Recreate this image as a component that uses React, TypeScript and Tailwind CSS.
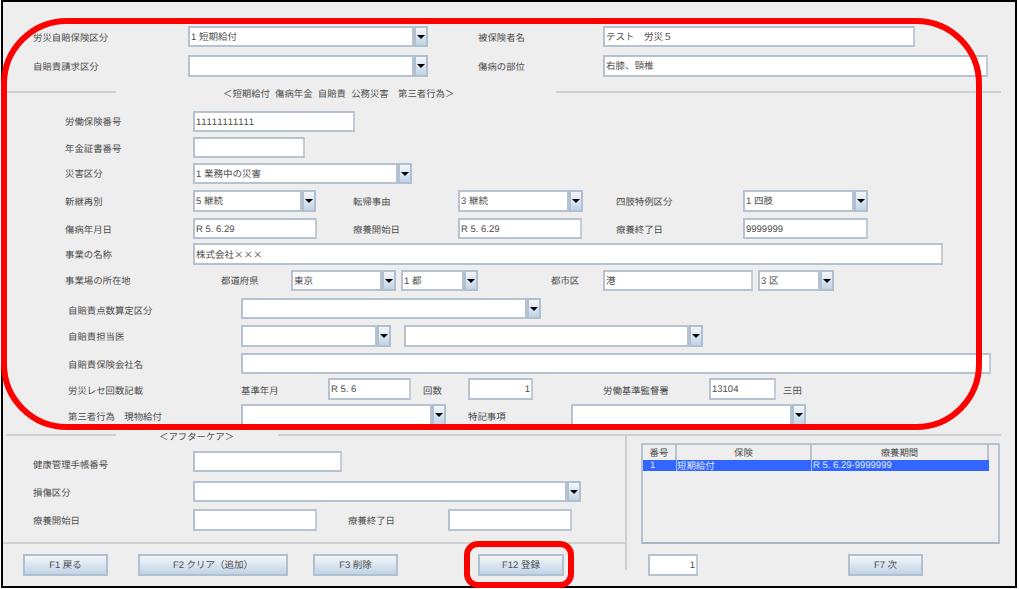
import React from "react";

const font = '"Liberation Sans","Noto Sans CJK JP",sans-serif';

function Field({ className = "", value = "", right = false }: { className?: string; value?: string; right?: boolean }) {
  return (
    <div
      className={`shrink-0 h-full bg-white border-2 border-[#b6c2cf] border-r-[#c3ccd6] flex items-center px-px pt-[2px] text-[9.5px] leading-none text-[#4d4d4d] whitespace-nowrap ${right ? "justify-end" : ""} ${className}`}
    >
      {value}
    </div>
  );
}

function Combo({ className = "", value = "" }: { className?: string; value?: string }) {
  return (
    <div className={`shrink-0 h-full flex ${className}`}>
      <div className="flex-1 min-w-0 bg-white border-2 border-[#b6c2cf] flex items-center px-px pt-[2px] text-[9.5px] leading-none text-[#4d4d4d] whitespace-nowrap">
        {value}
      </div>
      <div className="w-[14px] shrink-0 border-2 border-[#b0c0d0] bg-gradient-to-b from-[#f4f7fb] to-[#c0d3e6] flex items-center justify-center">
        <div className="w-0 h-0 border-l-[4px] border-r-[4px] border-t-[4px] border-l-transparent border-r-transparent border-t-black" />
      </div>
    </div>
  );
}

function Label({ className = "", children }: { className?: string; children: React.ReactNode }) {
  return (
    <div className={`shrink-0 text-[9.4px] leading-none text-[#4d4d4d] whitespace-nowrap ${className}`}>{children}</div>
  );
}

function Btn({ className = "", children }: { className?: string; children: React.ReactNode }) {
  return (
    <div
      className={`shrink-0 h-full border-2 border-[#b0c0d0] bg-gradient-to-b from-[#f4f7fb] to-[#c0d3e6] flex items-center justify-center pt-[2px] text-[9.5px] leading-none text-[#4d4d4d] whitespace-nowrap ${className}`}
    >
      {children}
    </div>
  );
}

export default function App() {
  return (
    <div
      className="relative w-[1019px] h-[589px] bg-white overflow-hidden [text-rendering:geometricPrecision] [font-kerning:none]"
      style={{ fontFamily: font }}
    >
      <div className="ml-px w-[1016px] h-[588px] border-2 border-black bg-[#eeeeee] flex flex-col">
        {/* top rows */}
        <div className="mt-[24px] h-[21px] flex items-center pl-[30px]">
          <Label className="w-[155px] mt-[2px]">労災自賠保険区分</Label>
          <Combo className="w-[240px]" value="1 短期給付" />
          <Label className="ml-[50px] w-[125px] mt-[2px]">被保険者名</Label>
          <Field className="w-[312px]" value="テスト　労災５" />
        </div>
        <div className="mt-[8px] h-[22px] flex items-center pl-[30px]">
          <Label className="w-[155px] mt-[2px]">自賠責請求区分</Label>
          <Combo className="w-[240px]" />
          <Label className="ml-[50px] w-[125px] mt-[2px]">傷病の部位</Label>
          <Field className="w-[385px]" value="右膝、頸椎" />
        </div>

        <div className="mt-[9px] h-[15px] flex items-start pl-[3px]">
          <div className="mt-[5px] w-[110px] h-[2px] bg-[#cfcfcf]" />
          <Label className="ml-[107px] w-[333px] mt-[3px]">＜短期給付&nbsp; 傷病年金&nbsp; 自賠責&nbsp; 公務災害　第三者行為＞</Label>
          <div className="mt-[5px] w-[445px] h-[2px] bg-[#cfcfcf]" />
        </div>

        <div className="mt-[10px] h-[21px] flex items-center pl-[62px]">
          <Label className="w-[128px] mt-[1px]">労働保険番号</Label>
          <Field className="w-[162px]" value="11111111111" />
        </div>
        <div className="mt-[5px] h-[21px] flex items-center pl-[62px]">
          <Label className="w-[128px] mt-[2px]">年金証書番号</Label>
          <Field className="w-[112px]" />
        </div>
        <div className="mt-[5px] h-[21px] flex items-center pl-[62px]">
          <Label className="w-[128px] mt-[1px]">災害区分</Label>
          <Combo className="w-[219px]" value="1 業務中の災害" />
        </div>
        <div className="mt-[6px] h-[22px] flex items-center pl-[62px]">
          <Label className="w-[128px] mt-[1px]">新継再別</Label>
          <Combo className="w-[123px]" value="5 継続" />
          <Label className="ml-[37px] w-[105px] mt-[1px]">転帰事由</Label>
          <Combo className="w-[125px]" value="3 継続" />
          <Label className="ml-[33px] w-[127px] mt-[1px]">四肢特例区分</Label>
          <Combo className="w-[125px]" value="1 四肢" />
        </div>
        <div className="mt-[6px] h-[21px] flex items-center pl-[62px]">
          <Label className="w-[128px] mt-[2px]">傷病年月日</Label>
          <Field className="w-[124px]" value="R 5. 6.29" />
          <Label className="ml-[36px] w-[105px] mt-[2px]">療養開始日</Label>
          <Field className="w-[124px]" value="R 5. 6.29" />
          <Label className="ml-[34px] w-[127px] mt-[2px]">療養終了日</Label>
          <Field className="w-[125px]" value="9999999" />
        </div>
        <div className="mt-[4px] h-[22px] flex items-center pl-[62px]">
          <Label className="w-[128px] mt-[2px]">事業の名称</Label>
          <Field className="w-[750px] font-['Noto_Sans_CJK_JP']" value="株式会社×××" />
        </div>
        <div className="mt-[5px] h-[21px] flex items-center pl-[62px]">
          <Label className="w-[156px] mt-[1px]">事業場の所在地</Label>
          <Label className="w-[70px] mt-[1px]">都道府県</Label>
          <Combo className="w-[105px]" value="東京" />
          <Combo className="ml-[5px] w-[77px]" value="1 都" />
          <Label className="ml-[73px] w-[52px] mt-[1px]">都市区</Label>
          <Field className="w-[150px]" value="港" />
          <Combo className="ml-[5px] w-[76px]" value="3 区" />
        </div>
        <div className="mt-[7px] h-[21px] flex items-center pl-[65px]">
          <Label className="w-[173px] mt-[4px]">自賠責点数算定区分</Label>
          <Combo className="w-[300px]" />
        </div>
        <div className="mt-[6px] h-[22px] flex items-center pl-[65px]">
          <Label className="w-[173px] mt-[2px]">自賠責担当医</Label>
          <Combo className="w-[150px]" />
          <Combo className="ml-[13px] w-[299px]" />
        </div>
        <div className="mt-[6px] h-[21px] flex items-center pl-[65px]">
          <Label className="w-[173px] mt-[3px]">自賠責保険会社名</Label>
          <Field className="w-[750px]" />
        </div>
        <div className="mt-[4px] h-[22px] flex items-center pl-[65px]">
          <Label className="w-[173px] mt-[3px]">労災レセ回数記載</Label>
          <Label className="w-[87px] mt-[3px]">基準年月</Label>
          <Field className="w-[83px]" value="R 5. 6" />
          <Label className="ml-[12px] w-[45px] mt-[3px]">回数</Label>
          <Field className="w-[65px]" value="1" right />
          <Label className="ml-[70px] w-[106px] mt-[3px]">労働基準監督署</Label>
          <Field className="w-[67px]" value="13104" />
          <Label className="ml-[7px] mt-[3px]">三田</Label>
        </div>
        <div className="mt-[4px] h-[22px] flex items-center pl-[65px]">
          <Label className="w-[173px] mt-[3px]">第三者行為　現物給付</Label>
          <Combo className="w-[205px]" />
          <Label className="ml-[22px] w-[103px] mt-[3px]">特記事項</Label>
          <Combo className="w-[235px]" />
        </div>

        {/* after care heading */}
        <div className="mt-[2px] h-[14px] flex items-start pl-[3px]">
          <div className="mt-[6px] w-[110px] h-[2px] bg-[#cfcfcf]" />
          <Label className="ml-[43px] w-[119px] mt-[4px]">＜アフターケア＞</Label>
          <div className="mt-[6px] w-[723px] h-[2px] bg-[#cfcfcf]" />
        </div>

        <div className="flex flex-1 -mt-[6px] min-h-0">
          <div className="w-[622px] shrink-0 flex flex-col">
            <div className="mt-[15px] h-[21px] flex items-center pl-[30px]">
              <Label className="w-[160px] mt-[7px]">健康管理手帳番号</Label>
              <Field className="w-[149px]" />
            </div>
            <div className="mt-[9px] h-[21px] flex items-center pl-[30px]">
              <Label className="w-[160px] mt-[2px]">損傷区分</Label>
              <Combo className="w-[388px]" />
            </div>
            <div className="mt-[7px] h-[22px] flex items-center pl-[30px]">
              <Label className="w-[160px] mt-[2px]">療養開始日</Label>
              <Field className="w-[124px]" />
              <Label className="ml-[31px] w-[100px] mt-[2px]">療養終了日</Label>
              <Field className="w-[124px]" />
            </div>
            <div className="mt-[11px] h-[2px] bg-[#cfcfcf]" />
            <div className="mt-[10px] h-[22px] flex items-center pl-[20px]">
              <Btn className="w-[85px]">F1 戻る</Btn>
              <Btn className="ml-[30px] w-[150px]">F2 クリア（追加）</Btn>
              <Btn className="ml-[25px] w-[85px]">F3 削除</Btn>
              <Btn className="ml-[80px] w-[86px]">F12 登録</Btn>
            </div>
          </div>
          <div className="w-[2px] h-[134px] bg-[#cfcfcf] shrink-0" />
          <div className="flex-1 flex flex-col pl-[14px]">
            <div className="mt-[7px] w-[359px] h-[101px] border-2 border-[#b6c2cf] border-b-[#a9b6c3] shrink-0">
              <div className="flex h-[15px] w-[346px] text-[9.4px] leading-none text-[#4d4d4d]">
                <div className="w-[34px] flex items-center justify-center border-r-2 border-[#b6c2cf]">番号</div>
                <div className="w-[135px] flex items-center justify-center border-r-2 border-[#b6c2cf]">保険</div>
                <div className="flex-1 flex items-center justify-center border-r-2 border-[#b6c2cf]">療養期間</div>
              </div>
              <div className="flex h-[11px] w-[346px] bg-[#3366ff] text-[9.5px] leading-none text-[#dfe8ff]">
                <div className="w-[34px] flex items-center pl-[7px] border-r border-[#a9c0ff]">1</div>
                <div className="w-[135px] flex items-center border-r border-[#a9c0ff] text-[9.4px]">短期給付</div>
                <div className="flex-1 flex items-center pl-px whitespace-nowrap">R 5. 6.29-9999999</div>
              </div>
            </div>
            <div className="mt-[10px] h-[22px] flex items-center pl-[7px]">
              <Field className="w-[50px]" value="1" right />
              <Btn className="ml-[150px] w-[75px]">F7 次</Btn>
            </div>
          </div>
        </div>
      </div>

      {/* red annotations */}
      <div className="absolute left-[1px] top-[18px] w-[981px] h-[412px] rounded-[66px] border-[6px] border-[#ff0000]" />
      <div className="absolute left-[464px] top-[541px] w-[110px] h-[47px] rounded-[14px] border-[6px] border-[#ff0000]" />
    </div>
  );
}
